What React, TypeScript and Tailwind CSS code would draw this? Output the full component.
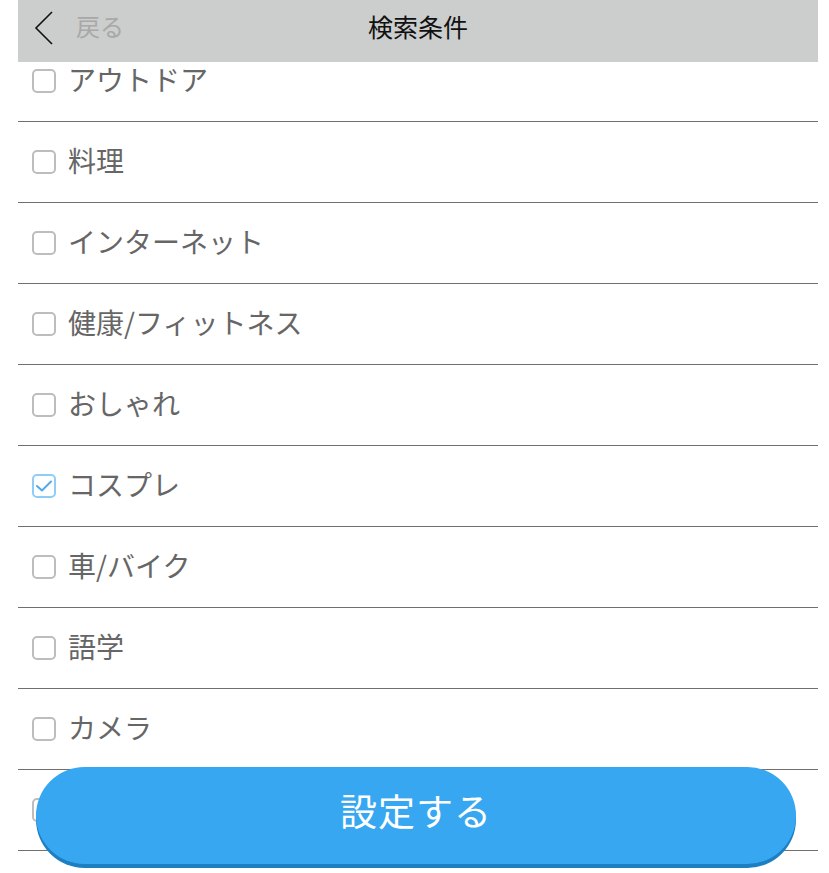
import React from "react";

const items: { label: string; checked?: boolean }[] = [
  { label: "アウトドア" },
  { label: "料理" },
  { label: "インターネット" },
  { label: "健康/フィットネス" },
  { label: "おしゃれ" },
  { label: "コスプレ", checked: true },
  { label: "車/バイク" },
  { label: "語学" },
  { label: "カメラ" },
  { label: "音楽" },
];

function Box({ checked }: { checked?: boolean }) {
  if (checked) {
    return (
      <div className="w-[24px] h-[24px] rounded-[5px] border-2 border-[#8ecdf8] flex items-center justify-center shrink-0">
        <svg width="20" height="20" viewBox="0 0 20 20" fill="none">
          <path d="M3 10 L8 14.5 L17 5.5" stroke="#52aae8" strokeWidth="2" strokeLinecap="round" strokeLinejoin="round" />
        </svg>
      </div>
    );
  }
  return <div className="w-[24px] h-[24px] rounded-[5px] border-2 border-[#bdbdbd] shrink-0" />;
}

export default function App() {
  return (
    <div
      className="relative w-[829px] h-[873px] overflow-hidden bg-white"
      style={{ fontFamily: '"Noto Sans CJK JP", "Noto Sans", sans-serif' }}
    >
      <div className="mx-[18px] w-[800px] pt-[41px]">
        {items.map((it) => (
          <div
            key={it.label}
            className="h-[81px] border-b border-[#707070] flex items-center pl-[14px] gap-[12px]"
          >
            <Box checked={it.checked} />
            <span className="text-[28px] leading-none text-[#666666] -mt-[5px]">{it.label}</span>
          </div>
        ))}
      </div>

      <div className="absolute top-0 left-[18px] w-[800px] h-[62px] bg-[#cccdcd] flex items-center">
        <div className="absolute left-[16px] top-[11px] flex items-center">
          <svg width="20" height="36" viewBox="0 0 20 36" fill="none">
            <path d="M18 1 L2 17 L18 33" stroke="#111" strokeWidth="1.6" />
          </svg>
          <span className="ml-[22px] text-[24px] leading-none text-[#a8a8a8] -mt-[6px]">戻る</span>
        </div>
        <div className="w-full text-center text-[25px] leading-none text-[#111] -mt-[10px]">検索条件</div>
      </div>

      <button className="absolute left-[36px] top-[767px] w-[760px] h-[97px] rounded-[50px] bg-[#38a7f1] shadow-[0_4px_0_#1c7fc2] flex items-center justify-center text-white text-[37px] leading-none tracking-[1px]">
        <span className="-mt-[10px]">設定する</span>
      </button>
    </div>
  );
}
